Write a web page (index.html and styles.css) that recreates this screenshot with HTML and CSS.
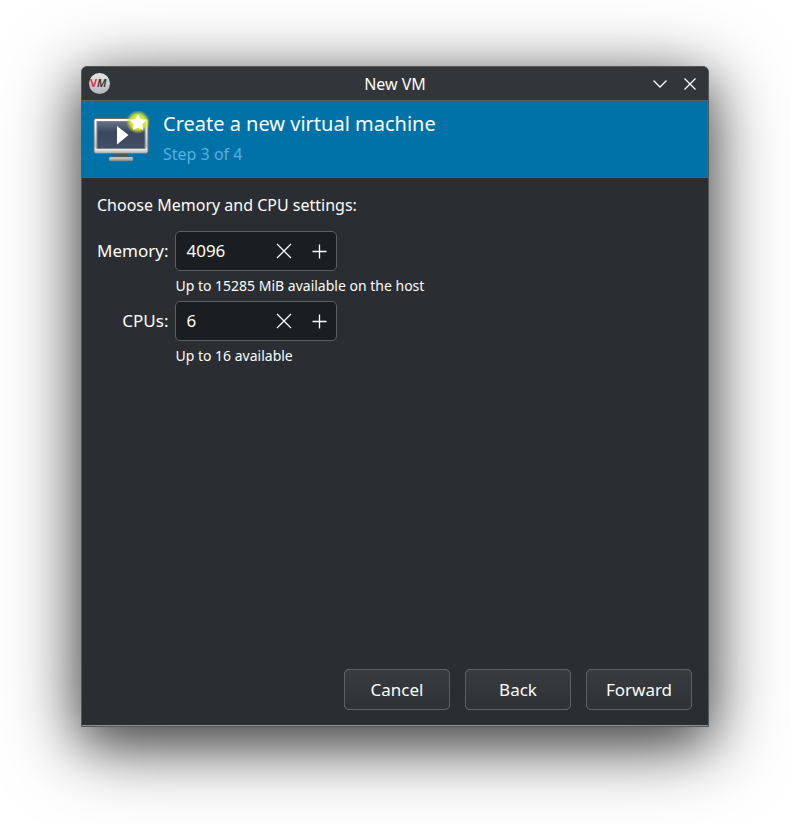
FILE: index.html
```html
<!DOCTYPE html>
<html lang="en">

<head>
    <meta charset="UTF-8">
    <meta name="viewport" content="width=device-width, initial-scale=1.0">
    <title>New VM</title>
    <link rel="stylesheet" href="styles.css">
</head>

<body>
    <div class="window">
        <div class="titlebar">
            <svg class="logo" viewBox="0 0 22 22">
                <defs>
                    <linearGradient id="disc" x1="0" y1="0" x2="0" y2="1">
                        <stop offset="0" stop-color="#e4e5e6" />
                        <stop offset="1" stop-color="#b4b8bb" />
                    </linearGradient>
                </defs>
                <circle cx="10.5" cy="10.5" r="10.5" fill="url(#disc)" />
                <text class="logo-v" x="1" y="14">V</text>
                <text class="logo-m" x="8" y="14">M</text>
            </svg>
            <h1 class="title">New VM</h1>
            <div class="controls">
                <button class="control" type="button" aria-label="Minimize">
                    <svg viewBox="0 0 16 16"><path d="M1.5 4.5 8 11l6.5-6.5" /></svg>
                </button>
                <button class="control" type="button" aria-label="Close">
                    <svg viewBox="0 0 16 16"><path d="M2.5 2.5l11 11M13.5 2.5l-11 11" /></svg>
                </button>
            </div>
        </div>

        <div class="banner">
            <svg class="monitor" viewBox="0 0 60 56">
                <defs>
                    <linearGradient id="frame" x1="0" y1="0" x2="0" y2="1">
                        <stop offset="0" stop-color="#ffffff" />
                        <stop offset="0.8" stop-color="#c4c4c2" />
                        <stop offset="0.88" stop-color="#eeeeec" />
                        <stop offset="1" stop-color="#a5a5a3" />
                    </linearGradient>
                    <linearGradient id="screen" x1="0" y1="0" x2="0" y2="1">
                        <stop offset="0" stop-color="#66728a" />
                        <stop offset="0.4" stop-color="#3b475c" />
                        <stop offset="1" stop-color="#424e63" />
                    </linearGradient>
                    <linearGradient id="foot" x1="0" y1="0" x2="0" y2="1">
                        <stop offset="0" stop-color="#dcdcda" />
                        <stop offset="1" stop-color="#8c8c8a" />
                    </linearGradient>
                    <radialGradient id="glow">
                        <stop offset="0" stop-color="#f8ff70" />
                        <stop offset="0.65" stop-color="#e2ee28" stop-opacity="0.85" />
                        <stop offset="1" stop-color="#c4dc30" stop-opacity="0" />
                    </radialGradient>
                </defs>
                <!-- stand -->
                <path d="M24 42h12l1 4H23z" fill="#555753" />
                <rect x="18" y="46" width="24" height="4" rx="1" fill="url(#foot)" stroke="#747673" stroke-width="0.5" />
                <!-- screen -->
                <rect x="3" y="7.500" width="54" height="35" rx="2" fill="url(#frame)" stroke="#73716d" />
                <rect x="6" y="10.500" width="48" height="27" fill="url(#screen)" stroke="#7d828a" />
                <path d="M26 15v18.500L37.500 24z" fill="#ffffff" />
                <!-- star -->
                <circle cx="47" cy="11" r="12" fill="url(#glow)" />
                <path d="M47 4l2.300 4.700 5.200.8-3.700 3.700.9 5.200-4.700-2.400-4.700 2.400.9-5.200-3.700-3.700 5.200-.8z" fill="#ffffff" stroke="#ffffff" stroke-linejoin="round" />
            </svg>
            <div class="heading">
                <h2 class="heading-title">Create a new virtual machine</h2>
                <p class="step">Step 3 of 4</p>
            </div>
        </div>

        <form class="page">
            <p class="intro">Choose Memory and CPU settings:</p>
            <div class="fields">
                <label class="label" for="memory">Memory:</label>
                <div class="spin">
                    <input class="spin-input" id="memory" type="text" inputmode="numeric" value="4096">
                    <button class="spin-button" type="button" aria-label="Decrease memory">
                        <svg viewBox="0 0 18 18"><path d="M2 2l14 14M16 2L2 16" /></svg>
                    </button>
                    <button class="spin-button" type="button" aria-label="Increase memory">
                        <svg viewBox="0 0 18 18"><path d="M9.500 2.500v14M2.500 9.500h14" /></svg>
                    </button>
                </div>
                <p class="hint">Up to 15285 MiB available on the host</p>

                <label class="label" for="cpus">CPUs:</label>
                <div class="spin">
                    <input class="spin-input" id="cpus" type="text" inputmode="numeric" value="6">
                    <button class="spin-button" type="button" aria-label="Decrease CPUs">
                        <svg viewBox="0 0 18 18"><path d="M2 2l14 14M16 2L2 16" /></svg>
                    </button>
                    <button class="spin-button" type="button" aria-label="Increase CPUs">
                        <svg viewBox="0 0 18 18"><path d="M9.500 2.500v14M2.500 9.500h14" /></svg>
                    </button>
                </div>
                <p class="hint">Up to 16 available</p>
            </div>

            <div class="actions">
                <button class="button" type="button">Cancel</button>
                <button class="button" type="button">Back</button>
                <button class="button" type="button">Forward</button>
            </div>
        </form>
    </div>
</body>

</html>
```
FILE: styles.css
```css
* {
    box-sizing: border-box;
    padding: 0;
    margin: 0;
}

body {
    display: flex;
    min-height: 100vh;
    padding: 66px 81px 97px;
    background-color: #fff;
    color: #fcfcfc;
    font-family: "Noto Sans", sans-serif;
    font-size: 17px;
    line-height: 24px;
}

button,
input {
    color: inherit;
    font: inherit;
}

svg {
    display: block;
}

.window {
    flex: 1;
    display: flex;
    flex-direction: column;
    border: 1px solid #54585b;
    border-radius: 6px 6px 0 0;
    background-color: #2a2e32;
    box-shadow: 0 16px 80px rgba(0, 0, 0, 0.5), 0 16px 50px rgba(0, 0, 0, 0.5);
}

/* titlebar */
.titlebar {
    display: grid;
    grid-template-columns: 1fr auto 1fr;
    align-items: center;
    height: 34px;
    padding: 0 7px;
    border-bottom: 1px solid #5c5f61;
    border-radius: 5px 5px 0 0;
    background-color: #31363b;
}

.logo {
    width: 22px;
    height: 22px;
    font-size: 11px;
}

.logo-v {
    fill: #e0364c;
    font-weight: bold;
}

.logo-m {
    fill: #333;
    font-style: italic;
    font-weight: 600;
}

.title {
    font-size: 16px;
    font-weight: normal;
}

.controls {
    display: flex;
    justify-content: flex-end;
    gap: 8px;
}

.control {
    width: 22px;
    height: 22px;
    padding: 3px;
    border: none;
    background: none;
}

.control svg,
.spin-button svg {
    fill: none;
    stroke: #fcfcfc;
    stroke-width: 1.3;
}

/* banner */
.banner {
    display: flex;
    align-items: center;
    gap: 12px;
    height: 77px;
    padding: 0 9px;
    border-right: 1px solid #5c5f61;
    border-bottom: 1px solid #5c5f61;
    background-color: #0072a8;
}

.monitor {
    width: 60px;
    height: 56px;
}

.heading-title {
    font-size: 20px;
    font-weight: normal;
    line-height: 30px;
}

.step {
    font-size: 16px;
    line-height: 30px;
    color: #5aaee0;
}

/* page */
.page {
    flex: 1;
    display: flex;
    flex-direction: column;
    padding: 15px 16px 15px 15px;
    border-bottom: 1px solid #8f9294;
}

.intro {
    margin-bottom: 14px;
    font-size: 16px;
}

.fields {
    display: grid;
    grid-template-columns: auto 1fr;
    column-gap: 7px;
    align-items: center;
}

.label {
    text-align: right;
}

.spin {
    display: flex;
    width: 162px;
    height: 40px;
    border: 1px solid #5c6063;
    border-radius: 5px;
    background-color: #1b1e20;
}

.spin-input {
    flex: 1;
    min-width: 0;
    padding-left: 10px;
    border: none;
    outline: none;
    background: none;
}

.spin-button {
    display: flex;
    align-items: center;
    justify-content: center;
    width: 35px;
    border: none;
    background: none;
}

.spin-button svg {
    width: 18px;
    height: 18px;
}

.hint {
    grid-column: 2;
    font-size: 14px;
    line-height: 30px;
}

/* actions */
.actions {
    display: flex;
    justify-content: flex-end;
    gap: 15px;
    margin-top: auto;
}

.button {
    width: 106px;
    height: 41px;
    border: 1px solid #5c6063;
    border-radius: 5px;
    background-image: linear-gradient(#373c40, #2e3236);
}
```
